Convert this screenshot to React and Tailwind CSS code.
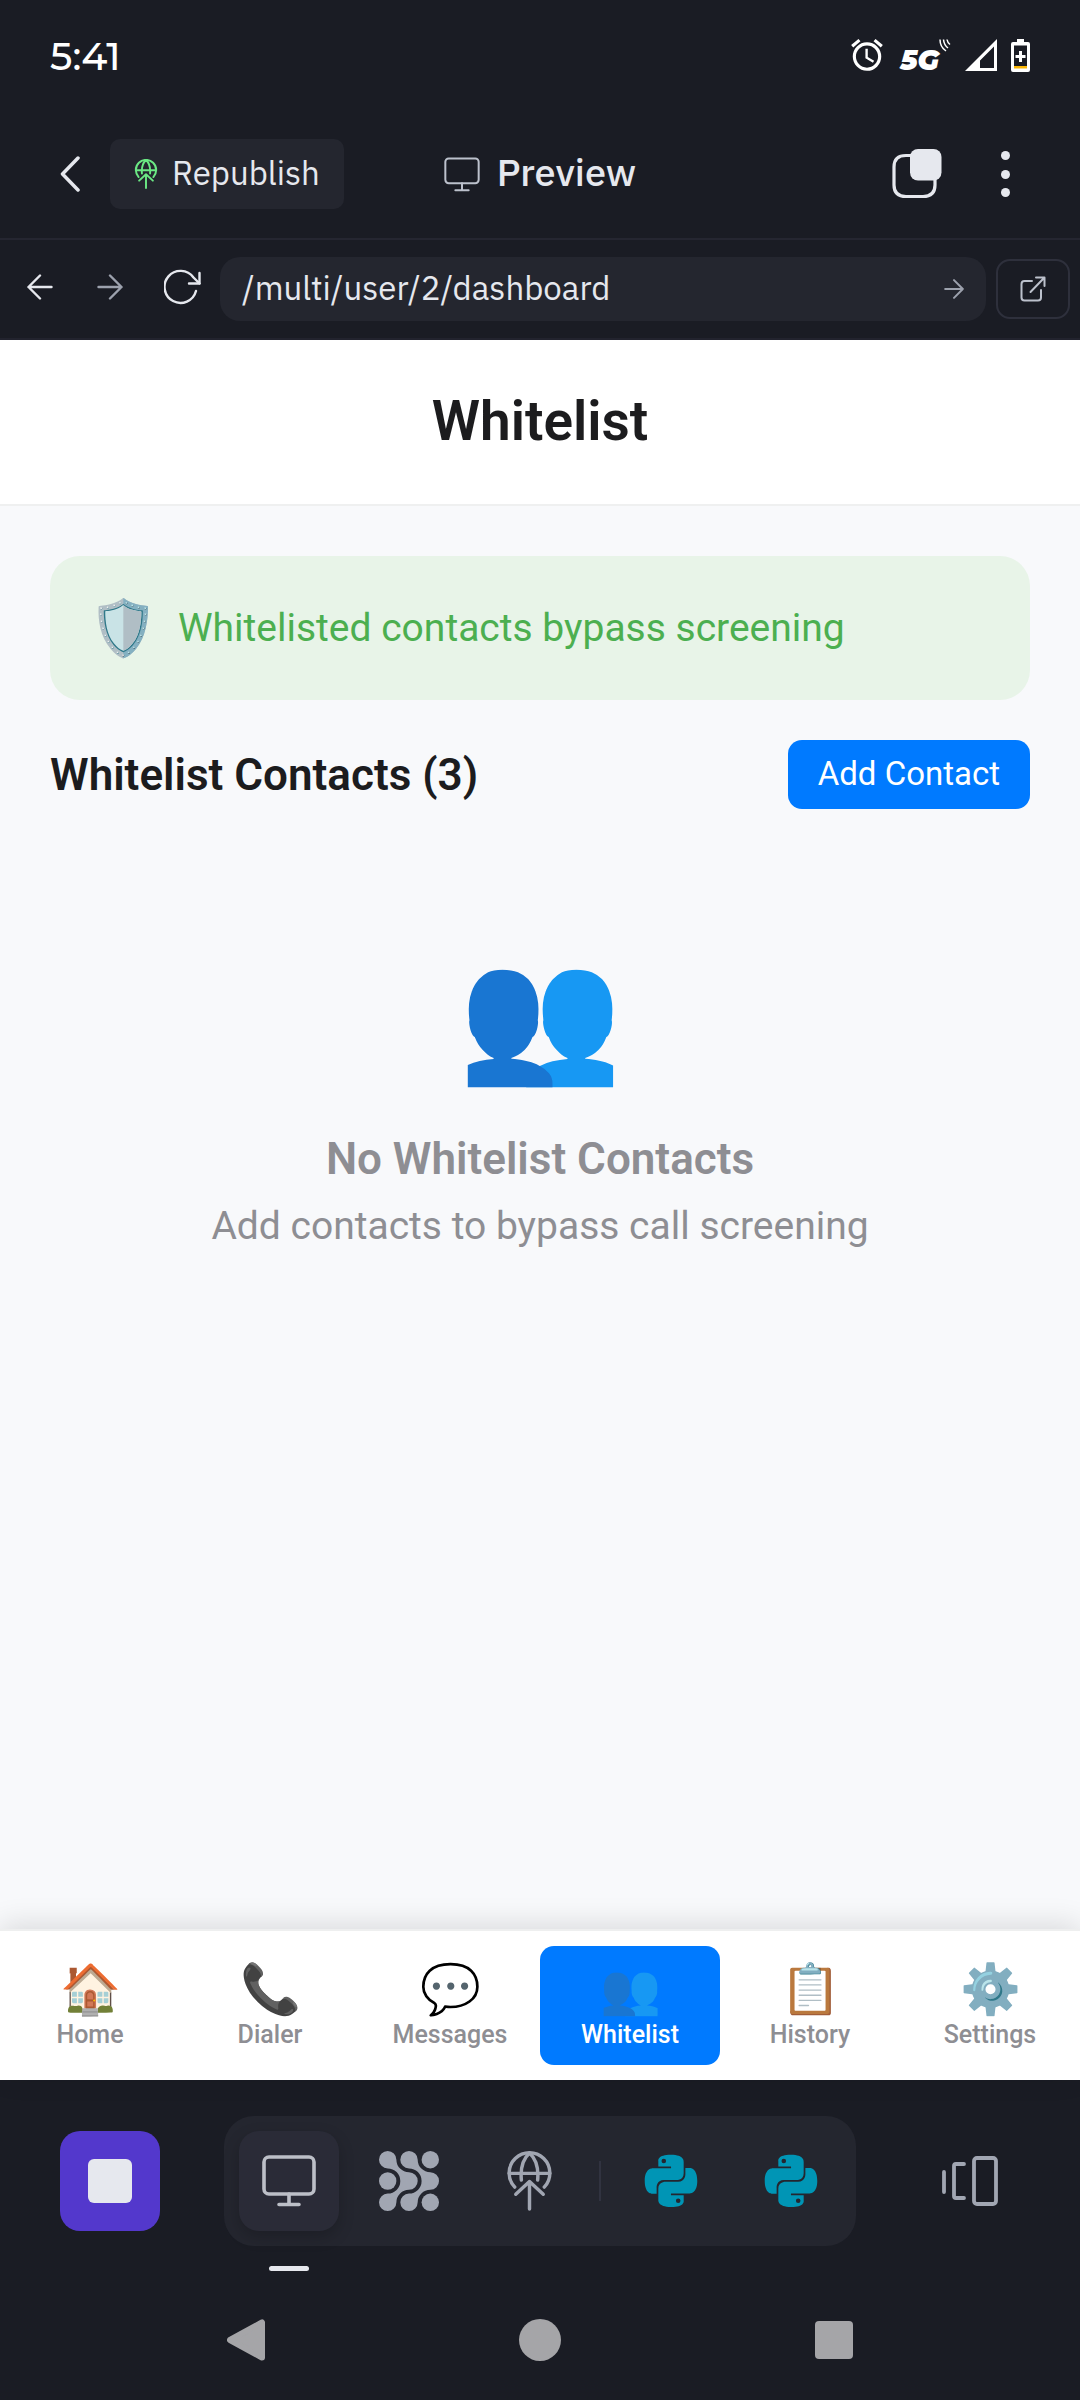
import { BiLogoPython } from 'react-icons/bi';
import { MdAlarm } from 'react-icons/md';

function Globe({ className, stroke }) {
  return (
    <svg viewBox="0 0 44 59" className={className} fill="none" stroke="currentColor" strokeWidth={stroke} strokeLinecap="round" strokeLinejoin="round" aria-hidden="true">
      <path d="M7.5 35.5A20 20 0 1 1 36.5 35.5" />
      <path d="M2 22H42M22 2C16 7.500 13 17.500 14 28.500M22 2C28 7.500 31 17.500 30 28.500" />
      <path d="M22 57V30M8.500 42.500 22 30 35.500 42.500" />
    </svg>
  );
}

function Monitor({ className, stroke }) {
  return (
    <svg viewBox="0 0 54 52" className={className} fill="none" stroke="currentColor" strokeWidth={stroke} strokeLinecap="round" strokeLinejoin="round" aria-hidden="true">
      <rect x="2" y="2" width="50" height="37" rx="5" />
      <path d="M27 39V49M17 49.500H37" />
    </svg>
  );
}

function Arrow({ className, stroke }) {
  return (
    <svg viewBox="0 0 26 26" className={className} fill="none" stroke="currentColor" strokeWidth={stroke} strokeLinecap="round" strokeLinejoin="round" aria-hidden="true">
      <path d="M1.500 13H24.500M13 1.500 24.500 13 13 24.500" />
    </svg>
  );
}

const agentShape = 'M8.700 0A8.700 8.700 0 0 1 17.400 8.700A12.600 12.600 0 0 0 30 21.300A8.700 8.700 0 0 1 30 38.700A12.600 12.600 0 0 0 17.400 51.300A8.700 8.700 0 1 1 8.700 42.600A12.600 12.600 0 0 0 8.700 17.400A8.700 8.700 0 0 1 8.700 0Z';

function AgentGrid() {
  return (
    <svg viewBox="0 0 60 60" className="size-15" fill="currentColor" aria-hidden="true">
      <path d={agentShape} />
      <path d={agentShape} transform="translate(21.300 0)" />
      <circle cx="8.700" cy="30" r="8.700" />
      <circle cx="51.300" cy="8.700" r="8.700" />
      <circle cx="51.300" cy="51.300" r="8.700" />
    </svg>
  );
}

function StatusBar() {
  return (
    <div className="flex h-[110px] items-center justify-between px-[50px] text-white">
      <time className="pt-0.5 font-['Montserrat','Inter',sans-serif] text-[39px] leading-none font-medium">5:41</time>
      <div className="flex items-center" aria-hidden="true">
        <MdAlarm className="size-[38px]" />
        <span className="ml-3.5 pt-2.5 font-['Montserrat','Inter',sans-serif] text-[28px] leading-none font-black italic">5G</span>
        <svg viewBox="0 0 12 13" className="mb-5 h-[13px] w-3" fill="none" stroke="currentColor" strokeWidth="1.500">
          <path d="M1 0.500Q1 8 7 12M4.500 0.500Q5 6 9 9M8 0.500Q8.500 3.500 11 5.500" />
        </svg>
        <svg viewBox="0 0 32 32" className="ml-3.5 size-8">
          <path d="M0 32 32 0V32ZM15 29H29V7.500L15 21.500Z" fill="currentColor" fillRule="evenodd" />
        </svg>
        <svg viewBox="0 0 19 33" className="ml-3.5 h-[33px] w-[19px]">
          <path d="M6 0H13V3H17Q19 3 19 5V31Q19 33 17 33H2Q0 33 0 31V5Q0 3 2 3H6ZM3 6.500V27H16V6.500Z" fill="currentColor" fillRule="evenodd" />
          <path d="M9.500 12V23M4.500 17.500H14.500" stroke="currentColor" strokeWidth="3" />
          <path d="M3 27H16V29.500H3Z" fill="#fbb604" />
        </svg>
      </div>
    </div>
  );
}

function Header() {
  return (
    <header className="grid h-[130px] grid-cols-[1fr_auto_1fr] items-center border-b-2 border-[#252631] pr-[60px] pl-[50px] text-[#e6e8ee]">
      <div className="flex items-center">
        <button type="button" aria-label="Back" className="flex h-[70px] w-[60px] items-center pl-2.5">
          <svg viewBox="0 0 20 36" className="h-9 w-5" fill="none" stroke="currentColor" strokeWidth="3.500" strokeLinecap="round" strokeLinejoin="round">
            <path d="M18 2 2.500 18 18 34" />
          </svg>
        </button>
        <button type="button" className="flex h-[70px] items-center gap-3.5 rounded-[10px] bg-[#24262f] px-6">
          <Globe className="h-[30px] w-6 text-[#6be884]" stroke="3.800" />
          <span className="pb-1 text-[33px] leading-none">Republish</span>
        </button>
      </div>
      <h1 className="ml-2.5 flex items-center gap-[17px] text-[38px] leading-none font-medium">
        <Monitor className="h-[35px] w-9 text-[#bcc1cc]" stroke="3" />
        <span className="pb-1">Preview</span>
      </h1>
      <div className="flex items-center justify-end gap-12">
        <button type="button" aria-label="Tabs">
          <svg viewBox="0 0 50 50" className="size-[50px]">
            <path d="M20 6.500H14Q2 6.500 2 18V36Q2 47.500 14 47.500H31Q43 47.500 43 36V31" fill="none" stroke="currentColor" strokeWidth="3.200" />
            <rect x="18" y="0" width="31.500" height="31.500" rx="8" fill="currentColor" />
          </svg>
        </button>
        <button type="button" aria-label="More options" className="flex h-[50px] w-[30px] flex-col items-center justify-between py-0.5">
          <span className="size-[9px] rounded-full bg-current" />
          <span className="size-[9px] rounded-full bg-current" />
          <span className="size-[9px] rounded-full bg-current" />
        </button>
      </div>
    </header>
  );
}

function Toolbar() {
  return (
    <div className="flex h-[100px] items-center border-b-2 border-[#22232e] pr-2.5 pl-[27px] text-[#e6e8ee]">
      <button type="button" aria-label="Go back" className="mr-[44px] pb-1">
        <Arrow className="size-[26px] rotate-180" stroke="2.400" />
      </button>
      <button type="button" aria-label="Go forward" className="mr-[41px] pb-1 text-[#9ca1ad]">
        <Arrow className="size-[26px]" stroke="2.400" />
      </button>
      <button type="button" aria-label="Reload" className="mr-[19px] pb-1">
        <svg viewBox="0 0 37 36" className="h-9 w-[37px]" fill="none" stroke="currentColor" strokeWidth="2.400" strokeLinecap="round" strokeLinejoin="round">
          <path d="M32 22A16 16 0 1 1 29.500 8.500L35.500 14.500" />
          <path d="M35.500 4V14.500H25" />
        </svg>
      </button>
      <form className="flex h-16 min-w-0 flex-1 items-center rounded-[20px] bg-[#24262f] pr-[22px] pl-[22px]" onSubmit={(e) => e.preventDefault()}>
        <input aria-label="Address" defaultValue="/multi/user/2/dashboard" className="min-w-0 flex-1 bg-transparent pb-1 text-[33px] leading-none text-[#e6e8ee] outline-none" />
        <button type="submit" aria-label="Go" className="text-[#9ca1ad]">
          <Arrow className="size-5" stroke="2.600" />
        </button>
      </form>
      <button type="button" aria-label="Open in new tab" className="ml-2.5 flex h-[60px] w-[74px] items-center justify-center rounded-[14px] border-2 border-[#2e303c] text-[#bcc1cc]">
        <svg viewBox="0 0 26 26" className="size-[26px]" fill="none" stroke="currentColor" strokeWidth="2" strokeLinecap="round" strokeLinejoin="round">
          <path d="M12 5H4.500Q1.500 5 1.500 8V21.500Q1.500 24.500 4.500 24.500H18Q21 24.500 21 21.500V14" />
          <path d="M16 1.500H24.500V10M24 2 10.500 16" />
        </svg>
      </button>
    </div>
  );
}

const tabs = [
  ['🏠', 'Home'],
  ['📞', 'Dialer'],
  ['💬', 'Messages'],
  ['👥', 'Whitelist'],
  ['📋', 'History'],
  ['⚙️', 'Settings'],
];

function Preview() {
  return (
    <div className="flex flex-1 flex-col bg-[#f8f9fb] font-['Roboto','Liberation_Sans',sans-serif] text-[#1c1c1e]">
      <div className="flex h-[166px] items-center justify-center border-b-2 border-[#eff0f0] bg-white pb-0.5">
        <h2 className="text-[55px] leading-none font-semibold">Whitelist</h2>
      </div>
      <main className="flex flex-1 flex-col px-[50px] pt-[50px]">
        <div className="flex h-36 items-center gap-[21px] rounded-[30px] bg-[#e8f4e8] px-[39px]">
          <span className="text-[55px] leading-none" aria-hidden="true">🛡️</span>
          <p className="text-[39px] leading-none text-[#4caf50]">Whitelisted contacts bypass screening</p>
        </div>
        <div className="mt-10 flex items-center justify-between">
          <h3 className="text-[44px] leading-none font-semibold">Whitelist Contacts (3)</h3>
          <button type="button" className="h-[69px] rounded-[14px] bg-[#007aff] px-[30px] pb-0.5 text-[33px] leading-none text-white">Add Contact</button>
        </div>
        <div className="mt-[129px] flex flex-col items-center text-[#8e8e93]">
          <span className="text-[132px] leading-[155px]" aria-hidden="true">👥</span>
          <h4 className="mt-10 text-[44px] leading-[52px] font-semibold">No Whitelist Contacts</h4>
          <p className="mt-[18px] text-[39px] leading-[46px]">Add contacts to bypass call screening</p>
        </div>
      </main>
      <nav aria-label="App" className="grid h-[151px] grid-cols-6 border-t-2 border-[#eeefef] bg-white py-[15px] shadow-[0_-5px_27px_rgba(0,0,0,0.12)]">
        {tabs.map(([icon, label]) => (
          <button
            key={label}
            type="button"
            className={
              label === 'Whitelist'
                ? 'flex flex-col items-center rounded-[14px] bg-[#007aff] pt-[15px] text-white'
                : 'flex flex-col items-center pt-[15px] text-[#8e8e93]'
            }
          >
            <span className="text-[49px] leading-[58px]" aria-hidden="true">{icon}</span>
            <span className="pt-px text-[25px] leading-[30px] font-medium">{label}</span>
          </button>
        ))}
      </nav>
    </div>
  );
}

function Dock() {
  return (
    <div className="flex h-[206px] items-start pt-9 pr-[82px] pl-[60px] text-[#a1a6b2]">
      <button type="button" aria-label="Stop" className="mt-[15px] flex size-25 items-center justify-center rounded-[20px] bg-[#5338cc]">
        <span className="size-11 rounded-md bg-[#e6e8ee]" />
      </button>
      <div className="ml-16 flex h-[130px] items-center rounded-[30px] bg-[#24262f] px-[15px]">
        <button type="button" aria-label="Preview" className="relative flex size-25 items-center justify-center rounded-[20px] bg-[#2a2b37] text-[#bcbfc7] shadow-[0_6px_16px_rgba(0,0,0,0.2)]">
          <Monitor className="h-[52px] w-[54px]" stroke="3.600" />
          <span className="absolute top-[135px] left-[30px] h-[5px] w-10 rounded-full bg-[#e6e8ee]" />
        </button>
        <button type="button" aria-label="Agent" className="ml-5 flex size-25 items-center justify-center"><AgentGrid /></button>
        <button type="button" aria-label="Publish" className="ml-5 flex size-25 items-center justify-center"><Globe className="h-[60px] w-[45px]" stroke="3.400" /></button>
        <span className="mx-5 h-10 w-0.5 bg-[#313340]" />
        <button type="button" aria-label="Python file one" className="flex size-25 items-center justify-center text-[#0095b5]"><BiLogoPython className="size-[70px]" /></button>
        <button type="button" aria-label="Python file two" className="ml-5 flex size-25 items-center justify-center text-[#0095b5]"><BiLogoPython className="size-[70px]" /></button>
      </div>
      <button type="button" aria-label="Switch panes" className="mt-10 ml-auto">
        <svg viewBox="0 0 56 50" className="h-[50px] w-14" fill="none" stroke="currentColor" strokeWidth="3.800" strokeLinecap="round" strokeLinejoin="round">
          <path d="M2 16V36M22 8H14Q12 8 12 10V40Q12 42 14 42H22" />
          <rect x="32" y="2" width="22" height="46" rx="3" />
        </svg>
      </button>
    </div>
  );
}

function SystemNav() {
  return (
    <div className="grid h-[114px] grid-cols-[1fr_auto_1fr] items-center pb-1.5 text-[#a5a5a8]">
      <button type="button" aria-label="System back" className="mr-[254px] justify-self-end">
        <svg viewBox="0 0 38 42" className="h-[42px] w-[38px]" fill="currentColor" stroke="currentColor" strokeWidth="6" strokeLinejoin="round">
          <path d="M3 21 35 3.500V38.500Z" />
        </svg>
      </button>
      <button type="button" aria-label="System home" className="size-[42px] rounded-full bg-current" />
      <button type="button" aria-label="Recent apps" className="ml-[254px] size-[38px] rounded bg-current" />
    </div>
  );
}

export default function App() {
  return (
    <div className="flex min-h-screen flex-col bg-[#1a1c24] font-['IBM_Plex_Sans','Roboto',sans-serif]">
      <StatusBar />
      <Header />
      <Toolbar />
      <Preview />
      <Dock />
      <SystemNav />
    </div>
  );
}
